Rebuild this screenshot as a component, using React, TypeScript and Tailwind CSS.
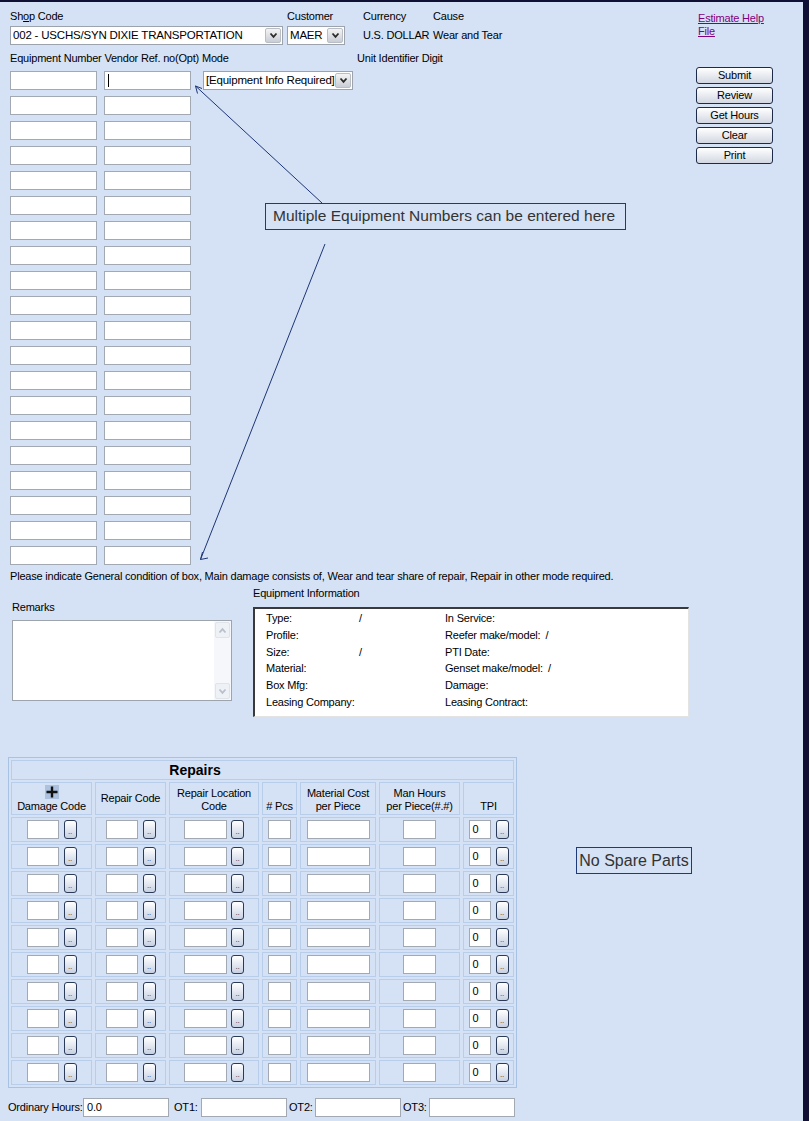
import React from "react";

const eqRows = Array.from({ length: 20 }, (_, i) => i);
const repairRows = Array.from({ length: 10 }, (_, i) => i);

const info = [
    ["Type:", "/", "In Service:", ""],
    ["Profile:", "", "Reefer make/model:", "/"],
    ["Size:", "/", "PTI Date:", ""],
    ["Material:", "", "Genset make/model:", "/"],
    ["Box Mfg:", "", "Damage:", ""],
    ["Leasing Company:", "", "Leasing Contract:", ""],
];

const Chevron = ({ color = "#2b2b2b" }: { color?: string }) => (
    <svg width="9" height="7" viewBox="0 0 9 7">
        <path d="M1.5 1.5 L4.5 4.8 L7.5 1.5" stroke={color} strokeWidth="1.8" fill="none" />
    </svg>
);

const Select = ({ className, text }: { className: string; text: string }) => {
    return (
        <div className={`flex h-[19px] items-center border border-[#9ca3ad] bg-white ${className}`}>
            <span className="flex-1 truncate pl-[2px] text-[11.5px] leading-[17px]">{text}</span>
            <div className="mr-[1px] flex h-[15px] w-[16px] items-center justify-center rounded-[2px] border border-[#b9bec6] bg-linear-to-b from-[#f4f4f4] to-[#c9cdd5]">
                <Chevron />
            </div>
        </div>
    );
};

const Field = ({ className, value }: { className: string; value?: string }) => (
    <div className={`h-[19px] border border-[#a3a9b2] bg-white pl-[3px] text-[11px] leading-[17px] ${className}`}>
        {value}
    </div>
);

const Btn = ({ label }: { label: string }) => (
    <div className="flex h-[17px] w-[77px] items-center justify-center rounded-[3px] border border-[#1d2b49] bg-linear-to-b from-white to-[#d2d7e1] text-[11px] leading-none">
        {label}
    </div>
);

const Dots = () => (
    <div className="flex h-[19px] w-[13px] items-end justify-center rounded-[3px] border border-[#2b3a57] bg-linear-to-b from-white to-[#c8d1e2] pb-[2px] text-[8px] leading-none text-[#333]">
        ..
    </div>
);

const cell = "border border-[#b8cde9]";

export default function App() {
    return (
        <div className="relative h-[1121px] w-[809px] overflow-hidden border-t-2 border-r-[6px] border-[#0f1034] bg-[#d5e2f5] font-['Liberation_Sans',Arial,sans-serif] text-[11px] tracking-[-0.2px] text-black">
            {/* top area */}
            <div className="flex pt-[8px]">
                <div className="w-[696px] pl-[10px]">
                    <div className="flex">
                        <div className="w-[277px]">
                            <div className="h-[13px] leading-[13px]">
                                Sh<span className="underline">o</span>p Code
                            </div>
                            <Select className="mt-[3px] w-[273px]" text="002 - USCHS/SYN DIXIE TRANSPORTATION" />
                        </div>
                        <div className="w-[76px]">
                            <div className="h-[13px] leading-[13px]">Customer</div>
                            <Select className="mt-[3px] w-[58px]" text=" MAER" />
                        </div>
                        <div className="w-[70px]">
                            <div className="h-[13px] leading-[13px]">Currency</div>
                            <div className="mt-[3px] h-[19px] whitespace-nowrap leading-[19px]">U.S. DOLLAR</div>
                        </div>
                        <div>
                            <div className="h-[13px] leading-[13px]">Cause</div>
                            <div className="mt-[3px] h-[19px] whitespace-nowrap leading-[19px]">Wear and Tear</div>
                        </div>
                    </div>

                    <div className="mt-[7px] flex h-[13px] leading-[13px]">
                        <span className="w-[347px] whitespace-nowrap">Equipment Number Vendor Ref. no(Opt) Mode</span>
                        <span>Unit Identifier Digit</span>
                    </div>

                    <div className="mt-[6px] flex flex-col gap-[6px]">
                        {eqRows.map((i) => (
                            <div key={i} className="flex items-center">
                                <Field className="w-[87px]" />
                                <div className="ml-[7px] flex h-[19px] w-[87px] items-center border border-[#a3a9b2] bg-white pl-[3px]">
                                    {i === 0 && <div className="h-[13px] w-px bg-black" />}
                                </div>
                                {i === 0 && <Select className="ml-[12px] w-[150px]" text="[Equipment Info Required]" />}
                            </div>
                        ))}
                    </div>
                </div>

                <div className="flex flex-col">
                    <a className="mt-[2px] ml-[2px] block leading-[13px] text-[#800080] underline">
                        Estimate Help
                        <br />
                        File
                    </a>
                    <div className="mt-[29px] flex flex-col gap-[3px]">
                        <Btn label="Submit" />
                        <Btn label="Review" />
                        <Btn label="Get Hours" />
                        <Btn label="Clear" />
                        <Btn label="Print" />
                    </div>
                </div>
            </div>

            <div className="mt-[5px] h-[13px] whitespace-nowrap pl-[10px] leading-[13px]">
                Please indicate General condition of box, Main damage consists of, Wear and tear share of repair, Repair in other mode required.
            </div>

            {/* remarks + equipment info */}
            <div className="mt-[4px] flex">
                <div className="mt-[14px] ml-[12px] w-[220px]">
                    <div className="h-[13px] leading-[13px]">Remarks</div>
                    <div className="mt-[6px] flex h-[81px] border border-[#9ea4ac] bg-white">
                        <div className="flex-1" />
                        <div className="flex w-[17px] flex-col justify-between bg-[#f5f7fa] p-px">
                            <div className="flex h-[16px] items-center justify-center rounded-[2px] border border-[#dfe3ea] bg-[#eef1f6]">
                                <div className="rotate-180">
                                    <Chevron color="#b9c0cb" />
                                </div>
                            </div>
                            <div className="flex h-[16px] items-center justify-center rounded-[2px] border border-[#dfe3ea] bg-[#eef1f6]">
                                <Chevron color="#b9c0cb" />
                            </div>
                        </div>
                    </div>
                </div>
                <div className="ml-[21px]">
                    <div className="h-[13px] leading-[13px]">Equipment Information</div>
                    <div className="mt-[7px] h-[110px] w-[436px] border-t-2 border-r border-b border-l-2 border-t-[#3a3a3a] border-r-[#e3e3e3] border-b-[#e3e3e3] border-l-[#3a3a3a] bg-white pt-px pl-[11px]">
                        {info.map((r) => (
                            <div key={r[0]} className="grid h-[16.8px] grid-cols-[93px_86px_1fr] leading-[16.8px]">
                                <span className="whitespace-nowrap">{r[0]}</span>
                                <span>{r[1]}</span>
                                <span className="whitespace-nowrap">
                                    {r[2]}
                                    {r[3] && <span className="ml-[5px]">{r[3]}</span>}
                                </span>
                            </div>
                        ))}
                    </div>
                </div>
            </div>

            {/* repairs */}
            <div className="mt-[40px] flex">
                <div className="ml-[8px] grid w-[509px] grid-cols-[81px_71px_90px_35px_76px_81px_51px] gap-x-[3px] gap-y-[2px] border border-[#a8c2e3] p-[2px]">
                    <div className={`col-span-7 flex h-[20px] ${cell}`}>
                        <div className="w-[366px] text-center text-[14px] leading-[18px] font-bold tracking-normal">Repairs</div>
                    </div>

                    <div className={`flex h-[33px] flex-col items-center justify-end pb-[1px] leading-[13px] ${cell}`}>
                        <div className="mb-px flex h-[14px] w-[14px] items-center justify-center bg-[#abc1de]">
                            <svg width="12" height="12" viewBox="0 0 12 12">
                                <path d="M6 0.5 V11.5 M0.5 6 H11.5" stroke="#111" strokeWidth="2.4" />
                            </svg>
                        </div>
                        <span>Damage Code</span>
                    </div>
                    <div className={`flex h-[33px] items-center justify-center ${cell}`}>Repair Code</div>
                    <div className={`flex h-[33px] flex-col items-center justify-end pb-[1px] text-center leading-[13px] ${cell}`}>
                        <span>Repair Location</span>
                        <span>Code</span>
                    </div>
                    <div className={`flex h-[33px] flex-col items-center justify-end pb-[1px] leading-[13px] ${cell}`}>
                        <span># Pcs</span>
                    </div>
                    <div className={`flex h-[33px] flex-col items-center justify-end pb-[1px] leading-[13px] ${cell}`}>
                        <span>Material Cost</span>
                        <span>per Piece</span>
                    </div>
                    <div className={`flex h-[33px] flex-col items-center justify-end pb-[1px] leading-[13px] ${cell}`}>
                        <span>Man Hours</span>
                        <span className="whitespace-nowrap">per Piece(#.#)</span>
                    </div>
                    <div className={`flex h-[33px] flex-col items-center justify-end pb-[1px] leading-[13px] ${cell}`}>
                        <span>TPI</span>
                    </div>

                    {repairRows.map((i) => (
                        <React.Fragment key={i}>
                            <div className={`flex h-[25px] items-center justify-center gap-[5px] ${cell}`}>
                                <Field className="w-[32px]" />
                                <Dots />
                            </div>
                            <div className={`flex h-[25px] items-center justify-center gap-[5px] ${cell}`}>
                                <Field className="w-[32px]" />
                                <Dots />
                            </div>
                            <div className={`flex h-[25px] items-center justify-center gap-[4px] ${cell}`}>
                                <Field className="w-[43px]" />
                                <Dots />
                            </div>
                            <div className={`flex h-[25px] items-center justify-center ${cell}`}>
                                <Field className="w-[23px]" />
                            </div>
                            <div className={`flex h-[25px] items-center justify-center ${cell}`}>
                                <Field className="w-[63px]" />
                            </div>
                            <div className={`flex h-[25px] items-center justify-center ${cell}`}>
                                <Field className="w-[33px]" />
                            </div>
                            <div className={`flex h-[25px] items-center justify-center gap-[5px] ${cell}`}>
                                <Field className="w-[22px]" value="0" />
                                <Dots />
                            </div>
                        </React.Fragment>
                    ))}
                </div>

                <div className="mt-[90px] ml-[59px] h-[27px] w-[116px] border border-[#1e3a78] text-center text-[16px] leading-[25px] tracking-normal text-[#333]">
                    No Spare Parts
                </div>
            </div>

            {/* hours */}
            <div className="mt-[10px] ml-[8px] flex items-center">
                <span className="w-[75px] whitespace-nowrap">Ordinary Hours:</span>
                <Field className="w-[86px]" value="0.0" />
                <span className="w-[32px] pl-[5px]">OT1:</span>
                <Field className="w-[86px]" />
                <span className="w-[28px] pl-[2px]">OT2:</span>
                <Field className="w-[86px]" />
                <span className="w-[28px] pl-[2px]">OT3:</span>
                <Field className="w-[86px]" />
            </div>

            {/* annotation overlay */}
            <div className="absolute top-[201px] left-[265px] h-[27px] w-[361px] border border-[#1e3a78] pl-[7px] text-[15.5px] leading-[23px] whitespace-nowrap tracking-normal text-[#333]">
                Multiple Equipment Numbers can be entered here
            </div>
            <svg className="pointer-events-none absolute top-0 left-0" width="809" height="1121">
                <g stroke="#1d3575" strokeWidth="1" fill="none">
                    <line x1="322" y1="201" x2="195.5" y2="84" />
                    <polyline points="202,86.5 195.5,84 197.5,91.5" />
                    <line x1="325" y1="242" x2="200.5" y2="557.5" />
                    <polyline points="202.5,550 200.5,557.5 208,556" />
                </g>
            </svg>
        </div>
    );
}
